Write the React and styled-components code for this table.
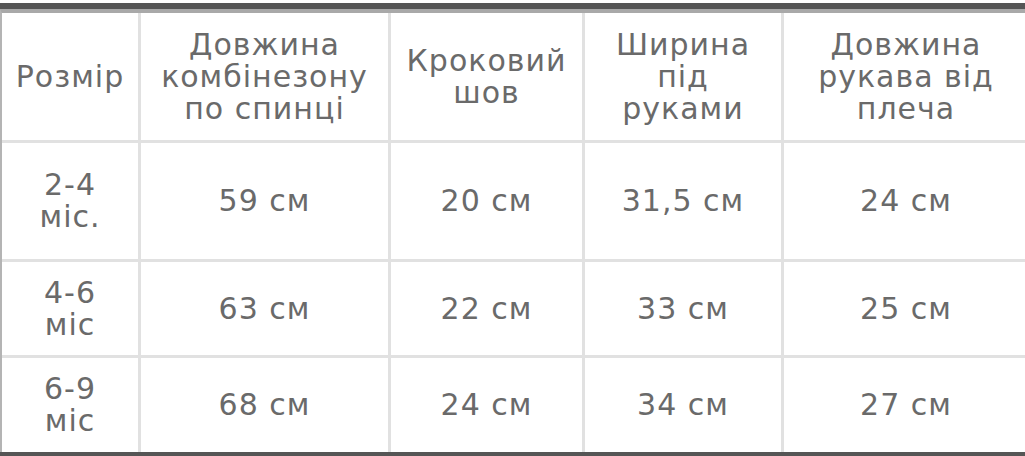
import styled, { createGlobalStyle } from "styled-components";

const GlobalStyle = createGlobalStyle`
	html, body {
		margin: 0;
		padding: 0;
		background: #fff;
		overflow: hidden;
	}
`;

const headers = [
	["Розмір"],
	["Довжина", "комбінезону", "по спинці"],
	["Кроковий", "шов"],
	["Ширина", "під", "руками"],
	["Довжина", "рукава від", "плеча"],
];

const rows = [
	{ size: ["2-4", "міс."], values: ["59 см", "20 см", "31,5 см", "24 см"], height: 116 },
	{ size: ["4-6", "міс"], values: ["63 см", "22 см", "33 см", "25 см"], height: 93 },
	{ size: ["6-9", "міс"], values: ["68 см", "24 см", "34 см", "27 см"], height: 94 },
];

function App() {
	return (
		<>
			<GlobalStyle />
			<Page>
				<Frame>
					<Grid $rows={`127px ${rows.map((r) => r.height + "px").join(" ")}`}>
						{headers.map((lines, i) => (
							<Cell key={i}>
								{lines.map((l) => (
									<Line key={l}>{l}</Line>
								))}
							</Cell>
						))}
						{rows.map((row) => [
							<Cell key={row.size[0]}>
								{row.size.map((l) => (
									<Line key={l}>{l}</Line>
								))}
							</Cell>,
							...row.values.map((v, i) => (
								<Cell key={row.size[0] + i}>
									<Line>{v}</Line>
								</Cell>
							)),
						])}
					</Grid>
				</Frame>
			</Page>
		</>
	);
}

const Page = styled.div`
	padding-top: 3px;
	width: 1040px;
`;

const Frame = styled.div`
	border-top: 6px solid #555555;
	border-bottom: 4px solid #555555;
`;

const Grid = styled.div`
	display: grid;
	grid-template-columns: 136px 247px 191px 196px 244px;
	grid-template-rows: ${(props) => props.$rows};
	gap: 3px;
	background-color: #e1e1e1;
	border-top: 4px solid #a9a9a9;
	border-left: 2px solid #b4b4b4;
`;

const Cell = styled.div`
	background-color: #fff;
	display: flex;
	flex-direction: column;
	justify-content: center;
	align-items: center;
	text-align: center;
	font-family: "DejaVu Sans", sans-serif;
	font-weight: 400;
	font-size: 30px;
	letter-spacing: 1px;
	line-height: 32px;
	color: #6a6a6a;
`;

const Line = styled.span`
	white-space: nowrap;
`;

export default App;
